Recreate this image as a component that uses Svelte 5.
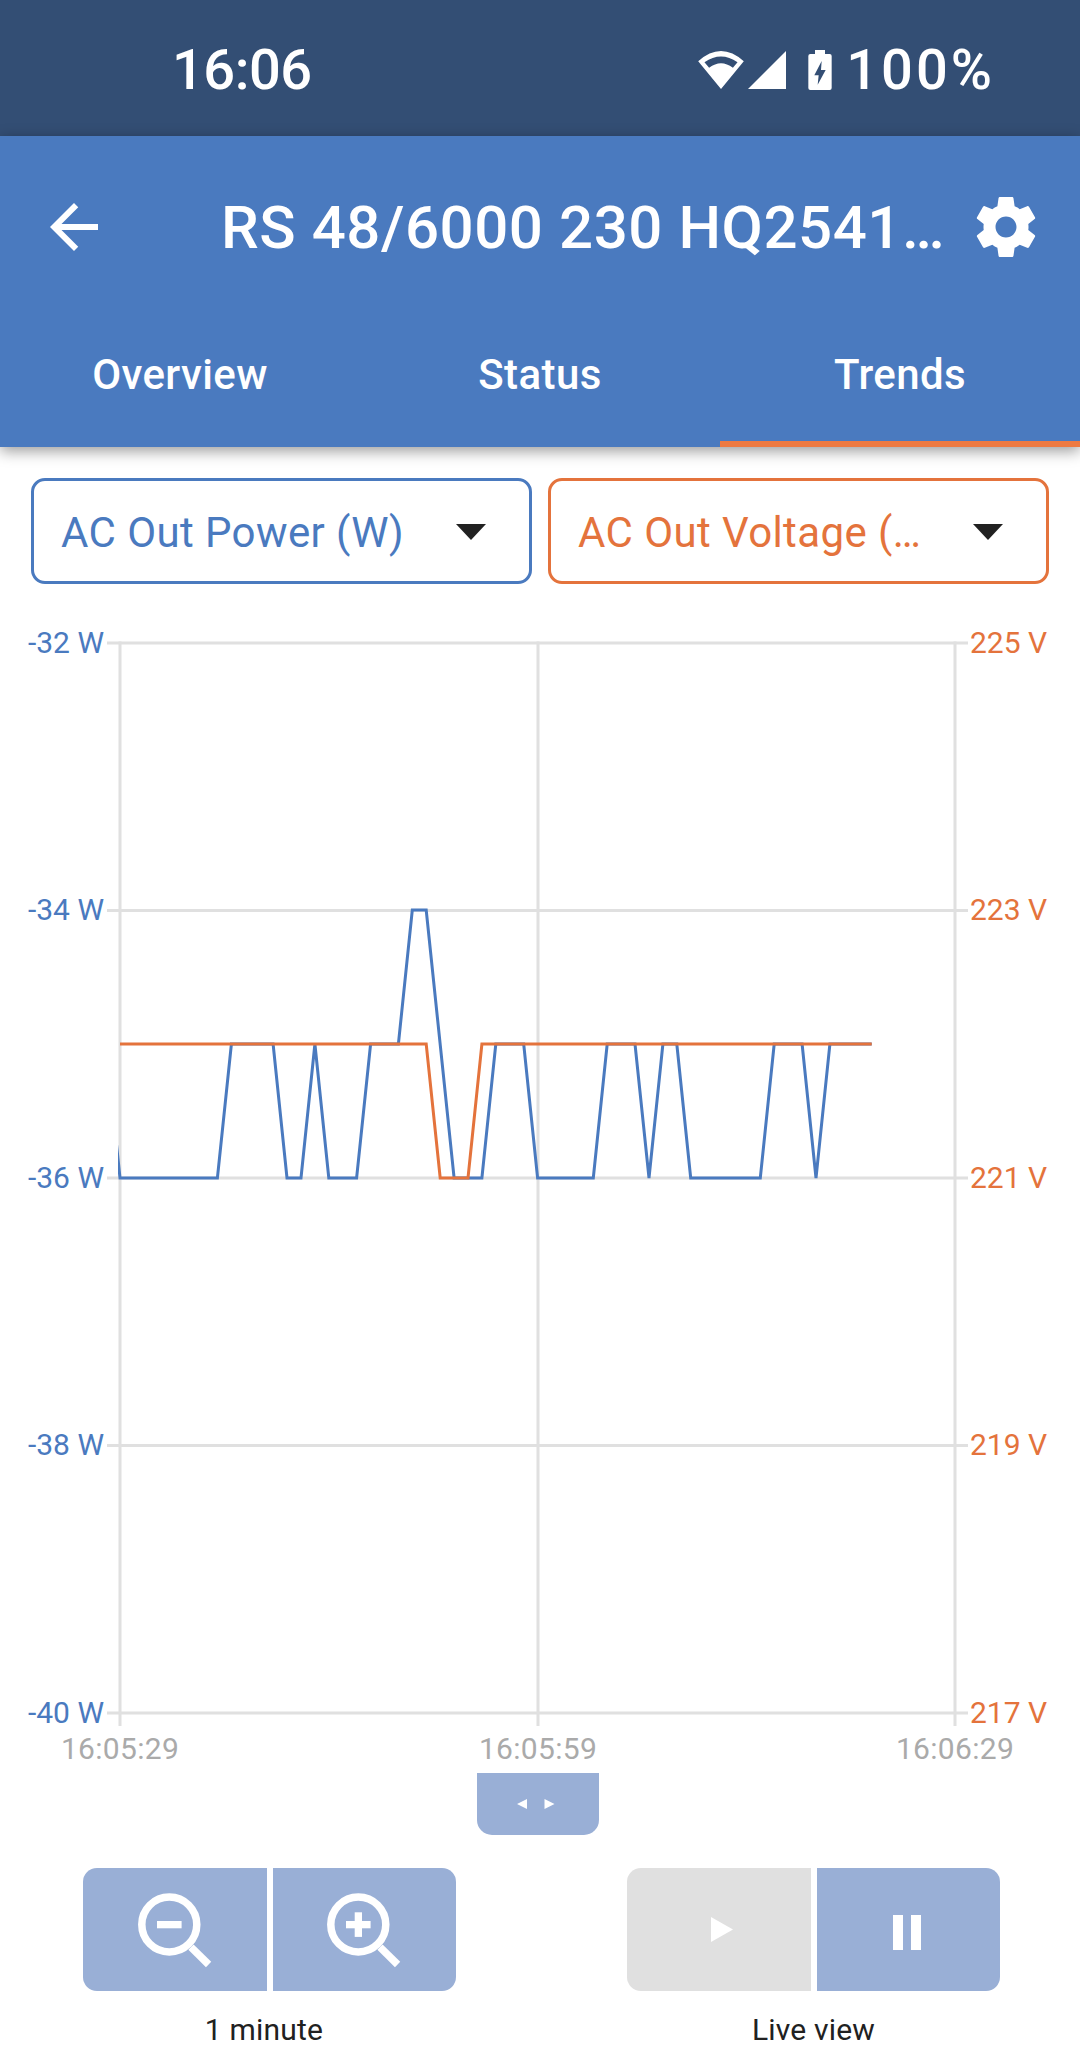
<script>
  const x = (i) => 120 + i * 13.92;
  const levels = { peak: 910, top: 1044, bottom: 1178 };
  const toPoints = (pairs) =>
    pairs.map(([i, l]) => `${x(i).toFixed(1)},${levels[l]}`).join(" ");

  const power = toPoints([
    [-1, "top"], [0, "bottom"], [7, "bottom"], [8, "top"], [11, "top"], [12, "bottom"],
    [13, "bottom"], [14, "top"], [15, "bottom"], [17, "bottom"], [18, "top"], [20, "top"],
    [21, "peak"], [22, "peak"], [24, "bottom"], [26, "bottom"], [27, "top"], [29, "top"],
    [30, "bottom"], [34, "bottom"], [35, "top"], [37, "top"], [38, "bottom"], [39, "top"],
    [40, "top"], [41, "bottom"], [46, "bottom"], [47, "top"], [49, "top"], [50, "bottom"],
    [51, "top"], [54, "top"]
  ]);
  const voltage = toPoints([
    [0, "top"], [22, "top"], [23, "bottom"], [25, "bottom"], [26, "top"], [54, "top"]
  ]);

  const rows = [
    { y: 643, w: "-32 W", v: "225 V" },
    { y: 910.5, w: "-34 W", v: "223 V" },
    { y: 1178, w: "-36 W", v: "221 V" },
    { y: 1445.5, w: "-38 W", v: "219 V" },
    { y: 1713, w: "-40 W", v: "217 V" }
  ];
  const ticks = [
    { x: 120, t: "16:05:29" },
    { x: 538, t: "16:05:59" },
    { x: 955, t: "16:06:29" }
  ];
  const tabs = ["Overview", "Status", "Trends"];
</script>

<div class="page">
  <div class="statusbar">
    <span class="clock">16:06</span>
    <div class="status-right">
      <svg class="wifi" viewBox="27 32 138 115">
        <path fill-rule="evenodd" d="M27 63Q96 1 165 63L96 147ZM46 66Q96 32 146 66L132 83Q96 55 60 83Z" />
      </svg>
      <svg class="signal" viewBox="178 33 114 114">
        <path d="M178 147L292 33V147Z" />
      </svg>
      <svg class="battery" viewBox="358 32 70 120">
        <path fill-rule="evenodd" d="M378 32H408V44H422Q428 44 428 50V146Q428 152 422 152H364Q358 152 358 146V50Q358 44 364 44H378ZM398 65L376 108H389L386 136L410 92H396Z" />
      </svg>
      <span class="percent">100%</span>
    </div>
  </div>

  <header class="appbar">
    <div class="toolbar">
      <svg class="back" viewBox="0 0 24 24">
        <path d="M20 11H7.83l5.59-5.59L12 4l-8 8 8 8 1.41-1.41L7.83 13H20v-2z" />
      </svg>
      <h1>RS 48/6000 230 HQ2541…</h1>
      <svg class="gear" viewBox="0 0 24 24">
        <path d="M19.43 12.98c.04-.32.07-.64.07-.98s-.03-.66-.07-.98l2.11-1.65c.19-.15.24-.42.12-.64l-2-3.46c-.12-.22-.39-.3-.61-.22l-2.49 1c-.52-.4-1.08-.73-1.69-.98l-.38-2.65C14.46 2.18 14.25 2 14 2h-4c-.25 0-.46.18-.49.42l-.38 2.65c-.61.25-1.17.59-1.69.98l-2.49-1c-.23-.09-.49 0-.61.22l-2 3.46c-.13.22-.07.49.12.64l2.11 1.65c-.04.32-.07.65-.07.98s.03.66.07.98l-2.11 1.65c-.19.15-.24.42-.12.64l2 3.46c.12.22.39.3.61.22l2.49-1c.52.4 1.08.73 1.69.98l.38 2.65c.03.24.24.42.49.42h4c.25 0 .46-.18.49-.42l.38-2.65c.61-.25 1.17-.59 1.69-.98l2.49 1c.23.09.49 0 .61-.22l2-3.46c.12-.22.07-.49-.12-.64l-2.11-1.65zM12 15.5c-1.93 0-3.5-1.57-3.5-3.5s1.57-3.5 3.5-3.5 3.5 1.57 3.5 3.5-1.57 3.5-3.5 3.5z" />
      </svg>
    </div>
    <nav class="tabs">
      {#each tabs as tab, i}
        <div class="tab" class:active={i === 2}>{tab}</div>
      {/each}
    </nav>
  </header>

  <div class="selects">
    <div class="select blue">
      <span>AC Out Power (W)</span>
      <i class="arrow"></i>
    </div>
    <div class="select orange">
      <span>AC Out Voltage (…</span>
      <i class="arrow"></i>
    </div>
  </div>

  <svg class="chart" viewBox="0 584 1080 1189">
    <defs>
      <clipPath id="plot">
        <rect x="118" y="600" width="840" height="1130" />
      </clipPath>
    </defs>

    {#each rows as r}
      <line class="grid" x1="107" x2="968" y1={r.y} y2={r.y} />
      <text class="axis-w" x="104" y={r.y + 9.5}>{r.w}</text>
      <text class="axis-v" x="970" y={r.y + 9.5}>{r.v}</text>
    {/each}
    {#each ticks as t}
      <line class="grid" x1={t.x} x2={t.x} y1="641.5" y2="1726" />
      <text class="axis-t" x={t.x} y="1759">{t.t}</text>
    {/each}

    <g clip-path="url(#plot)">
      <polyline class="series s-power" points={power} />
      <polyline class="series s-voltage" points={voltage} />
    </g>
  </svg>

  <div class="handle">
    <svg viewBox="0 0 122 62">
      <path d="M40 31L50 26V36Z M67.5 26L77.5 31L67.5 36Z" />
    </svg>
  </div>

  <div class="controls">
    <div class="group">
      <div class="buttons">
        <button class="btn first">
          <svg class="lens" viewBox="0 0 98 98">
            <circle cx="43.3" cy="43.5" r="27.5" />
            <line x1="65" y1="66.2" x2="82.6" y2="83.5" />
            <rect x="31" y="40" width="24.6" height="7.3" />
          </svg>
        </button>
        <button class="btn last">
          <svg class="lens" viewBox="0 0 98 98">
            <circle cx="43.3" cy="43.5" r="27.5" />
            <line x1="65" y1="66.2" x2="82.6" y2="83.5" />
            <rect x="31" y="40" width="24.6" height="7.3" />
            <rect x="39.7" y="31.3" width="7.3" height="24.6" />
          </svg>
        </button>
      </div>
      <div class="caption shifted">1 minute</div>
    </div>

    <div class="group">
      <div class="buttons">
        <button class="btn first off">
          <svg class="play" viewBox="0 0 22 25"><path d="M0 0L22 12.5L0 25Z" /></svg>
        </button>
        <button class="btn last">
          <svg class="pause" viewBox="0 0 28 35"><path d="M0 0H10V35H0ZM18 0H28V35H18Z" /></svg>
        </button>
      </div>
      <div class="caption">Live view</div>
    </div>
  </div>
</div>

<style>
  :global(body) {
    margin: 0;
    background: #fff;
  }

  .page {
    width: 1080px;
    height: 2072px;
    overflow: hidden;
    font-family: Roboto, sans-serif;
  }

  .statusbar {
    height: 136px;
    background: #334e74;
    color: #fff;
    display: flex;
    align-items: center;
    justify-content: space-between;
    padding: 3px 85px 0 172px;
    box-sizing: border-box;
  }

  .clock,
  .percent {
    font-size: 56px;
    line-height: 1;
    font-weight: 500;
  }

  .clock {
    letter-spacing: -0.5px;
  }

  .percent {
    letter-spacing: 3px;
  }

  .status-right {
    display: flex;
    align-items: center;
  }

  .status-right svg {
    fill: #fff;
    display: block;
  }

  .wifi {
    width: 46px;
    height: 38px;
    margin-right: 4px;
  }

  .signal {
    width: 38px;
    height: 38px;
    margin-right: 22px;
  }

  .battery {
    width: 24px;
    height: 40px;
    margin-right: 14px;
  }

  .appbar {
    position: relative;
    background: #4a7abf;
    color: #fff;
    height: 311px;
    box-shadow: 0 4px 14px rgba(0, 0, 0, 0.4);
  }

  .toolbar {
    height: 182px;
    display: flex;
    align-items: center;
    padding-left: 38px;
  }

  .toolbar svg {
    width: 72px;
    height: 72px;
    fill: #fff;
    flex: none;
  }

  h1 {
    margin: 0 0 0 111px;
    width: 749px;
    font-size: 60px;
    font-weight: 500;
    letter-spacing: 0.55px;
    white-space: nowrap;
  }

  .tabs {
    display: flex;
    height: 129px;
  }

  .tab {
    flex: 1;
    display: flex;
    align-items: center;
    justify-content: center;
    font-size: 42px;
    font-weight: 500;
    letter-spacing: 0.4px;
    padding-bottom: 11px;
    border-bottom: 6px solid transparent;
  }

  .tab.active {
    border-bottom-color: #ee7a42;
  }

  .selects {
    display: flex;
    gap: 16px;
    padding: 31px 31px 0;
  }

  .select {
    flex: 1;
    height: 106px;
    box-sizing: border-box;
    border: 3px solid;
    border-radius: 14px;
    display: flex;
    align-items: center;
    justify-content: space-between;
    padding: 2px 43px 0 27px;
    font-size: 42px;
    letter-spacing: 0.4px;
    white-space: nowrap;
  }

  .select.blue {
    color: #4a7abf;
  }

  .select.orange {
    color: #e4733c;
  }

  .arrow {
    width: 0;
    height: 0;
    border-left: 15px solid transparent;
    border-right: 15px solid transparent;
    border-top: 16px solid #212121;
  }

  .chart {
    display: block;
    width: 1080px;
    height: 1189px;
    font-size: 30px;
  }

  .grid {
    stroke: #e0e0e0;
    stroke-width: 3;
  }

  .axis-w {
    fill: #4a7abf;
    text-anchor: end;
  }

  .axis-v {
    fill: #e4733c;
  }

  .axis-t {
    fill: #aaaaaa;
    text-anchor: middle;
    letter-spacing: 0.3px;
  }

  .series {
    fill: none;
    stroke-width: 3;
    stroke-linejoin: miter;
  }

  .s-power {
    stroke: #4a7abf;
  }

  .s-voltage {
    stroke: #e4733c;
  }

  .handle {
    width: 122px;
    height: 62px;
    margin-left: 477px;
    background: #99afd6;
    border-radius: 0 0 15px 15px;
  }

  .handle svg {
    display: block;
    width: 122px;
    height: 62px;
    fill: #fff;
  }

  .controls {
    display: flex;
    gap: 171px;
    padding: 33px 0 0 83px;
  }

  .group {
    width: 373px;
  }

  .buttons {
    display: flex;
    gap: 6px;
  }

  .btn {
    width: 183.5px;
    height: 123px;
    border: none;
    padding: 0;
    background: #99afd6;
    display: flex;
    align-items: center;
    justify-content: center;
  }

  .btn.first {
    border-radius: 14px 0 0 14px;
  }

  .btn.last {
    border-radius: 0 14px 14px 0;
  }

  .btn.off {
    background: #e0e0e0;
  }

  .btn svg {
    display: block;
    fill: #fff;
  }

  .lens {
    width: 98px;
    height: 98px;
  }

  .lens circle,
  .lens line {
    fill: none;
    stroke: #fff;
    stroke-width: 7.5;
  }

  .play {
    width: 22px;
    height: 25px;
    margin-left: 6px;
  }

  .pause {
    width: 28px;
    height: 35px;
    margin: 5px 3px 0 0;
  }

  .caption {
    margin-top: 21px;
    text-align: center;
    font-size: 30px;
    line-height: 36px;
    letter-spacing: 0.2px;
    color: #212121;
  }

  .caption.shifted {
    padding-right: 11px;
  }
</style>
